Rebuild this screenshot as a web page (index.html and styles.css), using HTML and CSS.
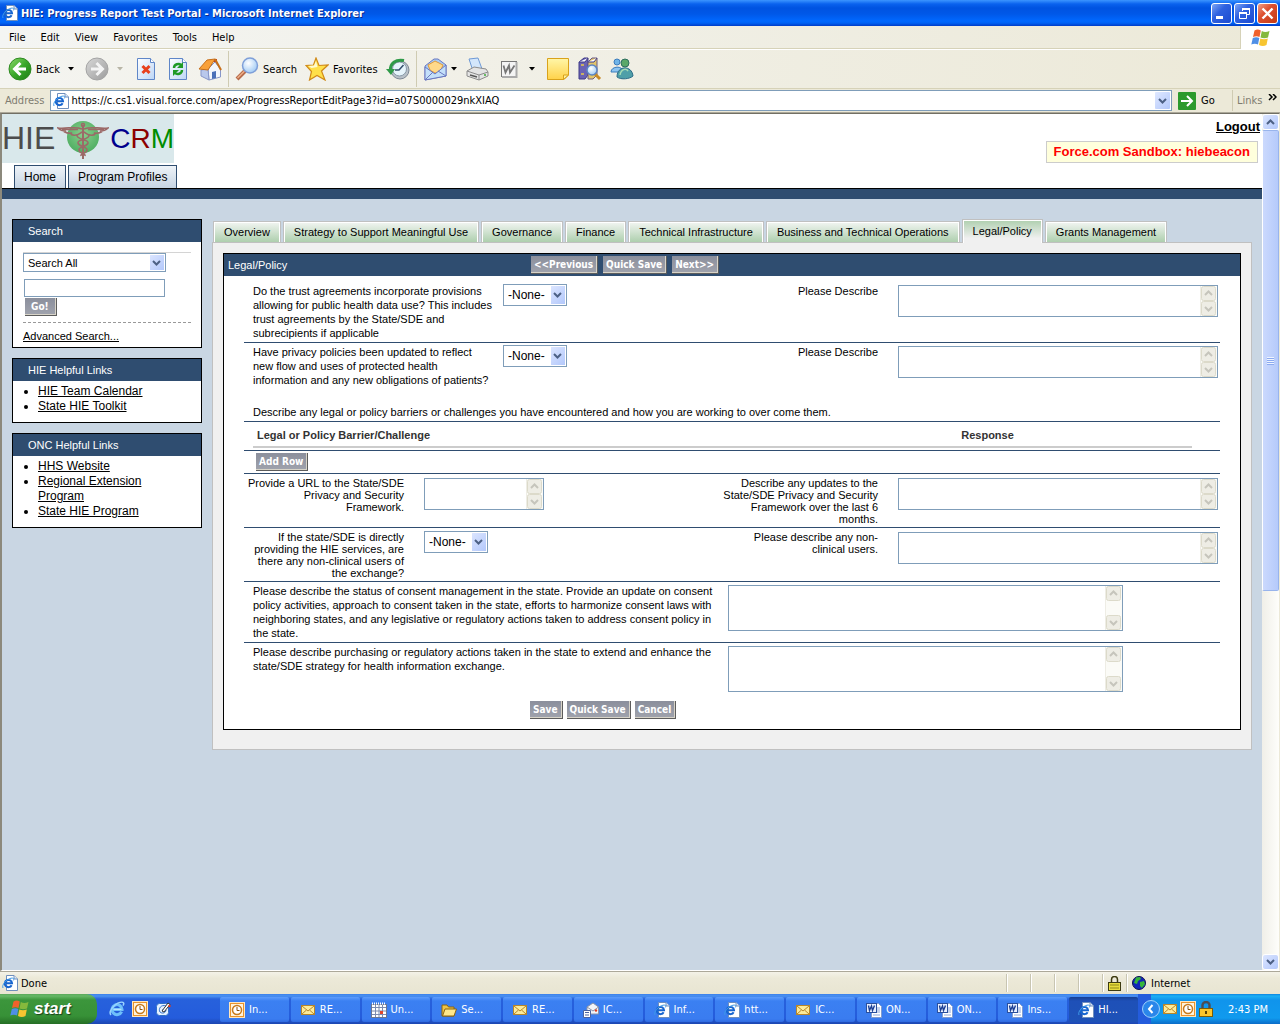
FILE: index.html
```
<!DOCTYPE html>
<html lang="en">
<head>
    <meta charset="UTF-8">
    <meta name="viewport" content="width=device-width, initial-scale=1.0">
    <title>HIE: Progress Report Test Portal</title>
    <link rel="stylesheet" href="styles.css">
</head>
<body>
    <!-- shared icons -->
    <svg class="sprite" width="0" height="0" aria-hidden="true">
        <defs>
            <linearGradient id="g-green" x1="0" y1="0" x2="1" y2="1">
                <stop offset="0" stop-color="#8fdc6c"/><stop offset="0.5" stop-color="#3aa82a"/><stop offset="1" stop-color="#1c7d14"/>
            </linearGradient>
            <linearGradient id="g-grey" x1="0" y1="0" x2="1" y2="1">
                <stop offset="0" stop-color="#d8d8d8"/><stop offset="1" stop-color="#9c9c9c"/>
            </linearGradient>
            <linearGradient id="g-paper" x1="0" y1="0" x2="1" y2="1">
                <stop offset="0" stop-color="#ffffff"/><stop offset="1" stop-color="#bcd6f6"/>
            </linearGradient>
            <linearGradient id="g-note" x1="0" y1="0" x2="0" y2="1">
                <stop offset="0" stop-color="#fff6a8"/><stop offset="1" stop-color="#ffd24a"/>
            </linearGradient>
            <radialGradient id="g-lens" cx="0.4" cy="0.35" r="0.7">
                <stop offset="0" stop-color="#ffffff"/><stop offset="1" stop-color="#9cc8f4"/>
            </radialGradient>
            <radialGradient id="g-orb" cx="0.5" cy="0.4" r="0.6">
                <stop offset="0" stop-color="#8bd08e"/><stop offset="1" stop-color="#4fae62"/>
            </radialGradient>
        </defs>
        <symbol id="i-ie" viewBox="0 0 16 16">
            <path d="M12.600 10.600A5 5 0 1 1 13 8.400H4.600" fill="none" stroke="#6fc0fa" stroke-width="3"/>
            <path d="M4.400 8.400h8" stroke="#b8e2ff" stroke-width="1.200"/>
            <path d="M2 14C-1 11 5 3 11 1.400c4-1 4.400 1 3 3.200" fill="none" stroke="#9ad4ff" stroke-width="1.500"/>
        </symbol>
        <symbol id="i-iepage" viewBox="0 0 16 16">
            <path d="M4.500 .5h7.500l3.500 3.500v11.500h-11z" fill="#fff" stroke="#6f8fbd"/>
            <path d="M12 .5V4h3.500" fill="#dde8f6" stroke="#6f8fbd"/>
            <path d="M9.600 10.200A3.600 3.600 0 1 1 10 8.200H4" fill="none" stroke="#1765cf" stroke-width="2"/>
            <path d="M1 13C-.5 10 4 4.400 9 3.200c3-.5 3 .8 2.200 2.300" fill="none" stroke="#3e9ae8" stroke-width="1"/>
        </symbol>
        <symbol id="i-mail" viewBox="0 0 16 16">
            <rect x="1.500" y="3.500" width="13" height="9" fill="#fdeb9a" stroke="#b8862a"/>
            <path d="M2 4l6 5 6-5M2 12l4.500-4M14 12L9.500 8" fill="none" stroke="#b8862a"/>
        </symbol>
        <symbol id="i-clock" viewBox="0 0 16 16">
            <rect x=".5" y=".5" width="15" height="15" fill="#e8942e" stroke="#ffe6bd"/>
            <rect x="2" y="2" width="12" height="12" fill="#fff3dc"/>
            <circle cx="8" cy="8" r="4.500" fill="#fff" stroke="#c87a1c" stroke-width="1.500"/>
            <path d="M8 5v3.500h2.500" fill="none" stroke="#8a5210"/>
        </symbol>
        <symbol id="i-word" viewBox="0 0 16 16">
            <path d="M5.500 1.500h7l3 3v11h-10z" fill="#fff" stroke="#7f9bd0"/>
            <path d="M11 6h3M11 8h3M11 10h3M7 13h7" stroke="#8aa6dc"/>
            <rect x=".5" y="1.500" width="10" height="9" fill="#e8f0ff" stroke="#2a4f9c"/>
            <path d="M2.500 3.500l1 5 2-4.500 1 4.500 2-5" fill="none" stroke="#1c3f94" stroke-width="1.400"/>
        </symbol>
        <symbol id="i-arrow" viewBox="0 0 6 4"><path d="M0 0h6L3 3.500z"/></symbol>
        <symbol id="i-flag" viewBox="0 0 20 18">
            <path d="M3.500 1.500C6 0 8 .5 9.800 1.500L8.500 8C6.500 7 4.500 7 2 8z" fill="#f0612c"/>
            <path d="M10.800 2C13 3.200 15.500 3.200 18.500 2L17 8.500c-2.500 1-5 1-7.500 0z" fill="#85b93c"/>
            <path d="M1.800 9C4 8 6.500 8 8.300 9L7 15.500C5 14.500 2.500 14.500.3 15.500z" fill="#4f8fe6"/>
            <path d="M9.300 9.500c2.200 1 5 1 7.500 0L15.500 16c-2.500 1.200-5 1.200-7.500 0z" fill="#f7c531"/>
        </symbol>
    </svg>

    <header class="titlebar">
        <svg class="icon16"><use href="#i-iepage"/></svg>
        <h1 class="window-title">HIE: Progress Report Test Portal - Microsoft Internet Explorer</h1>
        <button class="win-btn" type="button" aria-label="Minimize"><svg viewBox="0 0 19 19"><path d="M4 12h7v3H4z" fill="#fff"/></svg></button>
        <button class="win-btn" type="button" aria-label="Restore"><svg viewBox="0 0 19 19"><path d="M7.500 7V4.500h7v6H12M4.500 8.500h7v6h-7z" fill="none" stroke="#fff"/><path d="M7 4h8v2H7zM4 8h8v2H4z" fill="#fff"/></svg></button>
        <button class="win-btn win-btn-close" type="button" aria-label="Close"><svg viewBox="0 0 19 19"><path d="M4.500 4.500l10 10m0-10l-10 10" stroke="#fff" stroke-width="2.400"/></svg></button>
    </header>

    <div class="menubar">
        <nav class="menu">
            <button type="button">File</button>
            <button type="button">Edit</button>
            <button type="button">View</button>
            <button type="button">Favorites</button>
            <button type="button">Tools</button>
            <button type="button">Help</button>
        </nav>
        <div class="throbber"><svg width="20" height="18"><use href="#i-flag"/></svg></div>
    </div>

    <div class="toolbar">
        <button class="tool tool-nav" type="button">
            <svg class="icon24" viewBox="0 0 24 24"><circle cx="12" cy="12" r="11" fill="url(#g-green)" stroke="#2f8a22"/><path d="M12.500 6L6.500 12l6 6M7 12h11" fill="none" stroke="#fff" stroke-width="3"/></svg>
            <span>Back</span>
            <svg class="arrow"><use href="#i-arrow"/></svg>
        </button>
        <button class="tool tool-nav" type="button" aria-label="Forward">
            <svg class="icon24" viewBox="0 0 24 24"><circle cx="12" cy="12" r="11" fill="url(#g-grey)" stroke="#a4a4a4"/><path d="M11.500 6l6 6-6 6M17 12H6" fill="none" stroke="#f4f4f4" stroke-width="3"/></svg>
            <svg class="arrow arrow-off"><use href="#i-arrow"/></svg>
        </button>
        <button class="tool" type="button" aria-label="Stop">
            <svg class="icon24" viewBox="0 0 24 24"><path d="M3.500 1.500h13l4 4v17h-17z" fill="url(#g-paper)" stroke="#5f86c8"/><path d="M16.500 1.500v4h4" fill="#fff" stroke="#5f86c8"/><path d="M8.500 9l7 7m0-7l-7 7" stroke="#e8401c" stroke-width="3"/></svg>
        </button>
        <button class="tool" type="button" aria-label="Refresh">
            <svg class="icon24" viewBox="0 0 24 24"><path d="M3.500 1.500h13l4 4v17h-17z" fill="url(#g-paper)" stroke="#5f86c8"/><path d="M16.500 1.500v4h4" fill="#fff" stroke="#5f86c8"/><path d="M8 11c0-4 5-5 7-3" fill="none" stroke="#1f9a26" stroke-width="2.400"/><path d="M17 5v6h-6z" fill="#1f9a26"/><path d="M16 13c0 4-5 5-7 3" fill="none" stroke="#1f9a26" stroke-width="2.400"/><path d="M7 19v-6h6z" fill="#1f9a26"/></svg>
        </button>
        <button class="tool" type="button" aria-label="Home">
            <svg class="icon24" viewBox="0 0 24 24"><path d="M16 2h3v7h-3z" fill="#c23b22"/><path d="M10 12l7-7 5.500 7v8L11 23z" fill="#f3f6fc" stroke="#8796c8"/><path d="M3 13l7-1 1 11-8-4z" fill="#b9c8ec" stroke="#8796c8"/><path d="M1 12L9 3l8-1-7 11z" fill="#f9a13a" stroke="#c76f1a"/><path d="M17 2l6 11" stroke="#c76f1a" stroke-width="2"/><path d="M14 15l4-1v7l-4 1z" fill="#4a6fb8"/></svg>
        </button>
        <span class="sep"></span>
        <button class="tool" type="button">
            <svg class="icon24" viewBox="0 0 24 24"><path d="M10 14l-8 8" stroke="#b56a4a" stroke-width="4"/><path d="M9.500 14l-7 7" stroke="#f0b088" stroke-width="1.500"/><circle cx="15" cy="8.500" r="7.500" fill="url(#g-lens)" stroke="#7f9fd8" stroke-width="1.500"/></svg>
            <span>Search</span>
        </button>
        <button class="tool" type="button">
            <svg class="icon24" viewBox="0 0 24 24"><path d="M11 1l3 7.500 9-.5-6.500 6L20 23l-8-4.500L4.500 23 6.500 14.500 1 8.500l7.500-.5z" fill="#ffe04a" stroke="#d08a18" stroke-width="1.200"/><path d="M11 4l1.500 6-6 1-3-2 5.500-.5z" fill="#fffbd0"/></svg>
            <span>Favorites</span>
        </button>
        <button class="tool" type="button" aria-label="History">
            <svg class="icon24" viewBox="0 0 24 24"><circle cx="14" cy="13" r="9" fill="#b8c0c8" stroke="#7d8894"/><circle cx="13.500" cy="12" r="7" fill="#e6f4fb" stroke="#8899a8"/><path d="M17.500 8L13 13h-4" fill="none" stroke="#35506c" stroke-width="1.500"/><path d="M4.500 14C3.500 6 10 2 18 3.500" fill="none" stroke="#2f9a48" stroke-width="3"/><path d="M0 12h9l-4 6z" fill="#2f9a48"/></svg>
        </button>
        <span class="sep"></span>
        <button class="tool" type="button" aria-label="Mail">
            <svg class="icon24" viewBox="0 0 24 24"><path d="M2 9L11 2h4l8 6v11L2 23z" fill="#a9cdf5" stroke="#6a78c0"/><path d="M5 8l7-4 8 4-3 7-5 1-5-3z" fill="#ffd98a" stroke="#e09a3c"/><path d="M2 10l10 7 11-9v11L2 23z" fill="#c4e0fa" stroke="#6a78c0"/><path d="M2 23l8-8M23 19l-8-5" fill="none" stroke="#6a78c0"/></svg>
            <svg class="arrow"><use href="#i-arrow"/></svg>
        </button>
        <button class="tool" type="button" aria-label="Print">
            <svg class="icon24" viewBox="0 0 24 24"><path d="M4 2l9-1 4 11-9 2z" fill="#d3e6fb" stroke="#6f9ad6"/><path d="M2 14l7-4 12 2 2 3v4l-9 4-12-4z" fill="#e4e4e4" stroke="#8c8c8c"/><path d="M2 14l12 4 9-3M14 18v5" fill="none" stroke="#8c8c8c"/><path d="M5 18l7 2" stroke="#555" stroke-width="1.500"/><circle cx="20" cy="18" r="1" fill="#3fae3a"/></svg>
        </button>
        <button class="tool tool-nav" type="button" aria-label="Edit with Word">
            <svg class="icon24" viewBox="0 0 24 24"><rect x="4.500" y="4.500" width="15" height="15" fill="#f4f4f4" stroke="#777"/><path d="M19.500 5v15H5" fill="none" stroke="#aaa" stroke-width="2"/><path d="M6.500 8.500l2 7 3.500-7 1 7 4.500-7" fill="none" stroke="#777" stroke-width="1.800"/></svg>
            <svg class="arrow"><use href="#i-arrow"/></svg>
        </button>
        <button class="tool" type="button" aria-label="Discuss">
            <svg class="icon24" viewBox="0 0 24 24"><path d="M1.500 1.500h21V18L18 22.500H1.500z" fill="url(#g-note)" stroke="#d9a21a"/><path d="M17.500 22.500V18h5z" fill="#fff2a0" stroke="#d9a21a"/></svg>
        </button>
        <button class="tool" type="button" aria-label="Research">
            <svg class="icon24" viewBox="0 0 24 24"><path d="M1 5l5-4h4v17l-3 4H1z" fill="#6a63b4" stroke="#3f3a86"/><path d="M10 5l4-4h5v17l-4 4h-5z" fill="#e3c56a" stroke="#6b5a86"/><path d="M1 5h6l3-4M10 5h6l3-4" fill="#fff" stroke="#3f3a86"/><path d="M3 8h3M3 17h3M12 18h3" stroke="#e8c94a" stroke-width="1.500"/><path d="M17 17l5 5" stroke="#c78a28" stroke-width="3"/><circle cx="14" cy="13" r="5" fill="url(#g-lens)" stroke="#5b84c4" stroke-width="1.500"/></svg>
        </button>
        <button class="tool" type="button" aria-label="Messenger">
            <svg class="icon24" viewBox="0 0 24 24"><circle cx="7" cy="5" r="3" fill="#6fb4e8" stroke="#3c7cbc"/><path d="M1 15c0-6 12-7 12 0z" fill="#8cc4f0" stroke="#3c7cbc"/><circle cx="15" cy="6" r="4" fill="#5aa868" stroke="#2f6f60"/><path d="M7 20c0-12 15-12 16-1-3 3-12 4-16 1z" fill="#4f9fa8" stroke="#2c6c88"/><path d="M10 18c1-6 6-7 8-4" fill="none" stroke="#a6dcb4" stroke-width="1.500"/></svg>
        </button>
    </div>

    <div class="addressbar">
        <label class="dim" for="address">Address</label>
        <div class="address-box">
            <svg class="icon16"><use href="#i-iepage"/></svg>
            <input id="address" type="text" value="https://c.cs1.visual.force.com/apex/ProgressReportEditPage3?id=a07S0000029nkXIAQ">
            <button class="drop" type="button" aria-label="Show addresses"></button>
        </div>
        <button class="go" type="button">
            <svg width="18" height="18" viewBox="0 0 18 18"><rect width="18" height="18" rx="1" fill="#2c9a2c"/><path d="M3 9h11M9 4l5 5-5 5" fill="none" stroke="#fff" stroke-width="2"/></svg>
            <span>Go</span>
        </button>
        <div class="links"><span class="dim">Links</span><svg width="9" height="7" viewBox="0 0 9 7"><path d="M1 0l3 3-3 3M5 0l3 3-3 3" fill="none" stroke="#000" stroke-width="1.500"/></svg></div>
    </div>

    <div class="viewport">
        <div class="page">
            <div class="page-top">
                <div class="brand">
                    <div class="logo">
                        <span class="logo-hie">HIE</span>
                        <svg class="logo-mark" viewBox="0 0 52 44">
                            <circle cx="26" cy="20" r="16" fill="url(#g-orb)"/>
                            <g fill="none" stroke="#9c6a68" stroke-width="1.600">
                                <path d="M26 8v34" stroke-width="2"/>
                                <circle cx="26" cy="8" r="1.500"/>
                                <path d="M25 12C18 9 10 12 1 11c3 3 6 3 8 3-2 0-2 1-1 1 3 2 6 1 7 1-2 1 0 2 1 2 4 1 6-1 9-3"/>
                                <path d="M27 12c7-3 15 0 24-1-3 3-6 3-8 3 2 0 2 1 1 1-3 2-6 1-7 1 2 1 0 2-1 2-4 1-6-1-9-3"/>
                                <path d="M5 12.500h16M31 12.500h16"/>
                                <path d="M20 18c-1 5 12 4 11 8s-9 3-9 7 7 3 6 6"/>
                                <path d="M32 18c1 5-12 4-11 8s9 3 9 7-7 3-6 6"/>
                            </g>
                        </svg>
                        <span class="logo-crm"><span class="c">C</span><span class="r">R</span><span class="m">M</span></span>
                    </div>
                    <nav class="app-tabs">
                        <a href="#">Home</a>
                        <a href="#">Program Profiles</a>
                    </nav>
                </div>
                <div class="account">
                    <a class="logout" href="#">Logout</a>
                    <span class="sandbox">Force.com Sandbox: hiebeacon</span>
                </div>
            </div>
            <div class="strip"></div>

            <div class="columns">
                <aside class="sidebar">
                    <section class="box">
                        <h2>Search</h2>
                        <form class="search">
                            <select class="xp-select search-scope" aria-label="Search scope"><option>Search All</option></select>
                            <input class="search-text" type="text" aria-label="Search text">
                            <button class="btn" type="button">Go!</button>
                            <a class="advanced" href="#">Advanced Search...</a>
                        </form>
                    </section>
                    <section class="box">
                        <h2>HIE Helpful Links</h2>
                        <ul>
                            <li><a href="#">HIE Team Calendar</a></li>
                            <li><a href="#">State HIE Toolkit</a></li>
                        </ul>
                    </section>
                    <section class="box">
                        <h2>ONC Helpful Links</h2>
                        <ul>
                            <li><a href="#">HHS Website</a></li>
                            <li><a href="#">Regional Extension Program</a></li>
                            <li><a href="#">State HIE Program</a></li>
                        </ul>
                    </section>
                </aside>

                <main class="main">
                    <nav class="tabs">
                        <a href="#">Overview</a>
                        <a href="#">Strategy to Support Meaningful Use</a>
                        <a href="#">Governance</a>
                        <a href="#">Finance</a>
                        <a href="#">Technical Infrastructure</a>
                        <a href="#">Business and Technical Operations</a>
                        <a class="active" href="#">Legal/Policy</a>
                        <a href="#">Grants Management</a>
                    </nav>
                    <div class="panel">
                        <form class="block">
                            <div class="block-head">
                                <h2>Legal/Policy</h2>
                                <div class="block-buttons">
                                    <button class="btn" type="button">&lt;&lt;Previous</button>
                                    <button class="btn" type="button">Quick Save</button>
                                    <button class="btn" type="button">Next&gt;&gt;</button>
                                </div>
                            </div>
                            <div class="rows">
                                <div class="row row-question">
                                    <label for="trust">Do the trust agreements incorporate provisions allowing for public health data use? This includes trust agreements by the State/SDE and subrecipients if applicable</label>
                                    <select class="xp-select" id="trust"><option>-None-</option></select>
                                    <label class="small" for="trust-desc">Please Describe</label>
                                    <textarea id="trust-desc"></textarea>
                                </div>
                                <div class="row row-question row-open">
                                    <label for="privacy">Have privacy policies been updated to reflect new flow and uses of protected health information and any new obligations of patients?</label>
                                    <select class="xp-select" id="privacy"><option>-None-</option></select>
                                    <label class="small" for="privacy-desc">Please Describe</label>
                                    <textarea id="privacy-desc"></textarea>
                                </div>
                                <p class="row row-text">Describe any legal or policy barriers or challenges you have encountered and how you are working to over come them.</p>
                                <div class="row row-table">
                                    <table>
                                        <thead><tr><th>Legal or Policy Barrier/Challenge</th><th>Response</th></tr></thead>
                                    </table>
                                </div>
                                <div class="row row-add">
                                    <button class="btn" type="button">Add Row</button>
                                </div>
                                <div class="row row-pair">
                                    <label class="small" for="url">Provide a URL to the State/SDE Privacy and Security Framework.</label>
                                    <textarea class="narrow" id="url"></textarea>
                                    <label class="small" for="updates">Describe any updates to the State/SDE Privacy and Security Framework over the last 6 months.</label>
                                    <textarea id="updates"></textarea>
                                </div>
                                <div class="row row-pair">
                                    <label class="small" for="nonclinical">If the state/SDE is directly providing the HIE services, are there any non-clinical users of the exchange?</label>
                                    <select class="xp-select" id="nonclinical"><option>-None-</option></select>
                                    <label class="small" for="users">Please describe any non-clinical users.</label>
                                    <textarea id="users"></textarea>
                                </div>
                                <div class="row row-wide">
                                    <label for="consent">Please describe the status of consent management in the state. Provide an update on consent policy activities, approach to consent taken in the state, efforts to harmonize consent laws with neighboring states, and any legislative or regulatory actions taken to address consent policy in the state.</label>
                                    <textarea class="tall" id="consent"></textarea>
                                </div>
                                <div class="row row-wide row-open">
                                    <label for="purchasing">Please describe purchasing or regulatory actions taken in the state to extend and enhance the state/SDE strategy for health information exchange.</label>
                                    <textarea class="tall" id="purchasing"></textarea>
                                </div>
                            </div>
                            <div class="block-foot">
                                <button class="btn" type="button">Save</button>
                                <button class="btn" type="button">Quick Save</button>
                                <button class="btn" type="button">Cancel</button>
                            </div>
                        </form>
                    </div>
                </main>
            </div>
        </div>
        <div class="scrollbar">
            <button class="scroll-btn" type="button" aria-label="Scroll up"><svg width="9" height="6" viewBox="0 0 9 6"><path d="M1 5l3.500-3.500L8 5" fill="none" stroke="#4d6185" stroke-width="2"/></svg></button>
            <div class="scroll-track"><div class="scroll-thumb"></div></div>
            <button class="scroll-btn" type="button" aria-label="Scroll down"><svg width="9" height="6" viewBox="0 0 9 6"><path d="M1 1l3.500 3.500L8 1" fill="none" stroke="#4d6185" stroke-width="2"/></svg></button>
        </div>
    </div>

    <div class="statusbar">
        <div class="status-text"><svg class="icon16"><use href="#i-iepage"/></svg><span>Done</span></div>
        <div class="cell"></div>
        <div class="cell"></div>
        <div class="cell"></div>
        <div class="cell"></div>
        <div class="cell"><svg width="13" height="15" viewBox="0 0 13 15"><path d="M3.500 7V3.500a3 3 0 0 1 6 0V7" fill="none" stroke="#3c3a10" stroke-width="1.500"/><rect x=".5" y="6.500" width="12" height="8" fill="#e6dc3c" stroke="#3c3a10"/><path d="M2 9h9M2 12h9" stroke="#8f8818"/></svg></div>
        <div class="cell cell-zone"><svg width="14" height="14" viewBox="0 0 14 14"><circle cx="7" cy="7" r="6.500" fill="#1226b8" stroke="#0a0f50"/><path d="M4 1.500l4-.5 1 2-3 2-1 3-3-1zM8 6l4-1 1 3-3 4-2-2z" fill="#37b53a"/></svg><span>Internet</span></div>
    </div>

    <footer class="taskbar">
        <button class="start" type="button"><svg width="20" height="18"><use href="#i-flag"/></svg><span>start</span></button>
        <div class="quick">
            <button type="button" aria-label="Internet Explorer"><svg class="icon16"><use href="#i-ie"/></svg></button>
            <button type="button" aria-label="Outlook"><svg class="icon16"><use href="#i-clock"/></svg></button>
            <button type="button" aria-label="Show desktop"><svg class="icon16" viewBox="0 0 16 16"><rect x="1.500" y="2.500" width="12" height="12" rx="3" fill="#e6f2ff" stroke="#2f6fc8"/><path d="M11 5C6 3 3 8 5 11c2 2 6 1 6-2H7" fill="none" stroke="#2f6fc8"/><path d="M7 10l6-8 2 1.500-6 7.500z" fill="#fff" stroke="#333"/><circle cx="14.500" cy="5" r="1.200" fill="#e03a1c"/></svg></button>
        </div>
        <div class="tasks">
            <button type="button"><svg class="icon16"><use href="#i-clock"/></svg><span>In...</span></button>
            <button type="button"><svg class="icon16"><use href="#i-mail"/></svg><span>RE...</span></button>
            <button type="button"><svg class="icon16" viewBox="0 0 16 16"><rect x=".5" y="2.500" width="15" height="13" fill="#fff" stroke="#6c7690"/><path d="M1 5.500h14M1 9h14M1 12.500h14M4.500 3v12M8 3v12M11.500 3v12" stroke="#7d8cb0"/><path d="M1 1.500h14" stroke="#fff" stroke-width="2" stroke-dasharray="1 1"/><rect x="9" y="9" width="3" height="3" fill="#e0452a"/></svg><span>Un...</span></button>
            <button type="button"><svg class="icon16" viewBox="0 0 16 16"><path d="M1 3h5l1.500 2H13v9H1z" fill="#f0c445" stroke="#8c6410"/><path d="M4 7h11.500L13 14H1.500z" fill="#ffe88c" stroke="#8c6410"/></svg><span>Se...</span></button>
            <button type="button"><svg class="icon16"><use href="#i-mail"/></svg><span>RE...</span></button>
            <button type="button"><svg class="icon16" viewBox="0 0 16 16"><path d="M4 5l6-4 5.500 4v7H4z" fill="#f2f4f8" stroke="#8a93a8"/><path d="M4 5l6 4 5.500-4" fill="none" stroke="#8a93a8"/><path d="M.5 8.500h7v7h-7z" fill="#fff" stroke="#4a62a0"/><path d="M2 10.500h4M2 13h4" stroke="#4a62a0"/><circle cx="13" cy="8.500" r="1.200" fill="#e03a1c"/></svg><span>IC...</span></button>
            <button type="button"><svg class="icon16"><use href="#i-iepage"/></svg><span>Inf...</span></button>
            <button type="button"><svg class="icon16"><use href="#i-iepage"/></svg><span>htt...</span></button>
            <button type="button"><svg class="icon16"><use href="#i-mail"/></svg><span>IC...</span></button>
            <button type="button"><svg class="icon16"><use href="#i-word"/></svg><span>ON...</span></button>
            <button type="button"><svg class="icon16"><use href="#i-word"/></svg><span>ON...</span></button>
            <button type="button"><svg class="icon16"><use href="#i-word"/></svg><span>Ins...</span></button>
            <button class="active" type="button"><svg class="icon16"><use href="#i-iepage"/></svg><span>HI...</span></button>
        </div>
        <div class="tray">
            <button class="tray-toggle" type="button" aria-label="Show hidden icons"><svg width="18" height="18" viewBox="0 0 18 18"><circle cx="9" cy="9" r="8.500" fill="#2a86ea" stroke="#9fd0fa"/><path d="M10.500 5L7 9l3.500 4" fill="none" stroke="#fff" stroke-width="2"/></svg></button>
            <svg class="icon16"><use href="#i-mail"/></svg>
            <svg class="icon16"><use href="#i-clock"/></svg>
            <svg class="icon16" viewBox="0 0 16 16"><path d="M4.500 8V4a3.500 3 0 0 1 7 0v4" fill="none" stroke="#4c4c54" stroke-width="2.400"/><rect x="1.500" y="7.500" width="13" height="8" fill="#fcc52c" stroke="#7a5c08"/><path d="M8 10v3" stroke="#5c4404" stroke-width="2"/></svg>
            <time>2:43 PM</time>
        </div>
    </footer>
</body>
</html>
```
FILE: styles.css
```
* {
    box-sizing: border-box;
}
body {
    margin: 0;
    height: 100vh;
    display: flex;
    flex-direction: column;
    overflow: hidden;
    font-family: "DejaVu Sans Condensed", "DejaVu Sans", Tahoma, sans-serif;
    font-size: 11px;
    color: #000;
    background-color: #ece9d8;
}
button, input, select, textarea {
    font: inherit;
    color: inherit;
    margin: 0;
}
button {
    border: none;
    background: none;
    padding: 0;
}
svg {
    display: block;
    flex: none;
}
.sprite {
    position: absolute;
}
.icon16 {
    width: 16px;
    height: 16px;
}
.icon24 {
    width: 24px;
    height: 24px;
}
.arrow {
    width: 6px;
    height: 4px;
}
.arrow-off {
    fill: #b8b5a6;
}
.dim {
    color: #7f7c70;
}

/* title bar */
.titlebar {
    flex: none;
    height: 26px;
    display: flex;
    align-items: center;
    gap: 2px;
    padding: 0 2px;
    background: linear-gradient(#3c95ff 0, #0a62ee 4px, #0053e1 8px, #0058e8 14px, #0068ff 21px, #0062f4 23px, #003cc8 26px);
}
.window-title {
    flex: 1;
    margin: 0 0 0 1px;
    font-size: 11px;
    font-weight: bold;
    color: #fff;
    text-shadow: 1px 1px #0b2a8c;
}
.win-btn {
    width: 21px;
    height: 21px;
    border: 1px solid #fff;
    border-radius: 3px;
    background: linear-gradient(135deg, #7fa6f5, #2f62e0 40%, #1c4bd0);
}
.win-btn-close {
    background: linear-gradient(135deg, #f0a088, #dd5030 40%, #c23a14);
}

/* menu bar */
.menubar {
    flex: none;
    height: 24px;
    display: flex;
    border-bottom: 1px solid #fff;
    background: linear-gradient(90deg, #f4f5f3, #ece9d8);
}
.menu {
    flex: 1;
    display: flex;
    gap: 15px;
    padding-left: 9px;
    border-bottom: 1px solid #d6d2b8;
}
.throbber {
    width: 40px;
    display: flex;
    align-items: center;
    justify-content: center;
    border-left: 1px solid #d6d2b8;
    background-color: #fff;
}

/* toolbar */
.toolbar {
    flex: none;
    height: 39px;
    display: flex;
    align-items: center;
    padding-left: 4px;
    border-bottom: 1px solid #d6d2b8;
    background: linear-gradient(90deg, #f4f4f0, #ece9d8);
}
.tool {
    height: 32px;
    display: flex;
    align-items: center;
    gap: 4px;
    padding: 0 4px;
}
.tool-nav {
    margin-right: 3px;
}
.tool-nav .arrow {
    margin-left: 4px;
}
.sep {
    width: 1px;
    height: 36px;
    margin: 0 2px;
    background-color: #cfcbb2;
}

/* address bar */
.addressbar {
    flex: none;
    height: 24px;
    display: flex;
    align-items: center;
    gap: 6px;
    padding-left: 5px;
    border-bottom: 1px solid #aca899;
}
.address-box {
    flex: 1;
    height: 21px;
    display: flex;
    align-items: center;
    gap: 2px;
    padding: 1px;
    padding-left: 2px;
    border: 1px solid #7f9db9;
    background-color: #fff;
}
.address-box input {
    flex: 1;
    height: 17px;
    padding: 0;
    border: none;
    outline: none;
    background: none;
}
.drop {
    width: 15px;
    height: 17px;
    border-radius: 1px;
    background: url("data:image/svg+xml,%3Csvg xmlns='http://www.w3.org/2000/svg' width='9' height='6'%3E%3Cpath d='M1 1l3.500 3.500L8 1' fill='none' stroke='%234d6185' stroke-width='2'/%3E%3C/svg%3E") no-repeat center, linear-gradient(135deg, #dfe8ff, #b3c8fb);
}
.go {
    display: flex;
    align-items: center;
    gap: 5px;
    width: 48px;
}
.links {
    width: 48px;
    height: 21px;
    display: flex;
    align-items: center;
    gap: 6px;
    padding-left: 4px;
    border-left: 1px solid #cfcbb2;
}
.links svg {
    align-self: flex-start;
    margin-top: 4px;
}

/* browser viewport */
.viewport {
    flex: 1;
    min-height: 0;
    display: flex;
    border: 1px solid #716f64;
    border-left: 2px solid #8c897c;
    border-right-color: #ece9d8;
    border-bottom-color: #fff;
}
.page {
    flex: 1;
    overflow: hidden;
    font-family: "Liberation Sans", Arial, sans-serif;
    background-color: #c9d6e3;
}
.page a {
    color: #000;
}
.page-top {
    display: flex;
    justify-content: space-between;
    background-color: #fff;
}
.logo {
    width: 172px;
    height: 49px;
    display: flex;
    align-items: center;
    justify-content: space-between;
    background-color: #d9e8eb;
    line-height: 49px;
}
.logo-hie {
    font-size: 32px;
    color: #4c4c4c;
}
.logo-mark {
    width: 52px;
    height: 44px;
}
.logo-crm {
    font-size: 28px;
}
.logo-crm .c {
    color: #00008c;
}
.logo-crm .r {
    color: #8c0000;
}
.logo-crm .m {
    color: #008c00;
}
.app-tabs {
    display: flex;
    gap: 2px;
    padding: 2px 0 0 12px;
}
.app-tabs a {
    padding: 0 9px;
    border: 1px solid #2f4d70;
    border-bottom: none;
    background: linear-gradient(#eef3f8, #c6d4e3);
    font-size: 12px;
    line-height: 22px;
    text-decoration: none;
}
.account {
    display: flex;
    flex-direction: column;
    align-items: flex-end;
    gap: 6px;
    padding: 5px 2px;
    font-size: 13px;
    font-weight: bold;
}
.logout {
    line-height: 16px;
}
.sandbox {
    margin-right: 2px;
    padding: 0 7px;
    border: 1px solid #ccc;
    background-color: #ffffdc;
    line-height: 20px;
    color: #f00;
}
.strip {
    height: 11px;
    border-top: 1px solid #000;
    background-color: #2f4d70;
}
.columns {
    display: flex;
    align-items: flex-start;
    gap: 10px;
    padding: 20px 10px;
}

/* sidebar */
.sidebar {
    width: 190px;
    flex: none;
    display: flex;
    flex-direction: column;
    gap: 10px;
}
.box {
    border: 1px solid #000;
    background-color: #fff;
}
.box h2 {
    margin: 0;
    padding-left: 15px;
    background-color: #2f4d70;
    color: #fff;
    font-size: 11px;
    font-weight: normal;
    line-height: 22px;
}
.box ul {
    margin: 0;
    padding: 3px 24px 8px 25px;
    font-size: 12px;
    line-height: 15px;
}
.search {
    margin: 10px 10px 4px;
    display: flex;
    flex-direction: column;
    align-items: flex-start;
    border-top: 1px solid #d4d4d4;
}
.xp-select {
    appearance: none;
    width: 64px;
    height: 22px;
    padding: 0 4px;
    border: 1px solid #7f9db9;
    border-radius: 0;
    font-size: 12px;
    background: url("data:image/svg+xml,%3Csvg xmlns='http://www.w3.org/2000/svg' width='9' height='6'%3E%3Cpath d='M1 1l3.500 3.500L8 1' fill='none' stroke='%234d6185' stroke-width='2'/%3E%3C/svg%3E") no-repeat right 4px center, linear-gradient(135deg, #dbe5ff, #b3c8fb) no-repeat right 1px center / 14px calc(100% - 2px), #fff;
}
.search-scope {
    width: 143px;
    height: 19px;
    font-size: 11px;
}
.search-text {
    width: 141px;
    height: 18px;
    margin: 7px 0 0 1px;
    padding: 0 2px;
    border: 1px solid #7f9db9;
}
.btn {
    height: 18px;
    padding: 0 4px 0 3px;
    border-right: 1px solid #5c5c5c;
    border-bottom: 1px solid #5c5c5c;
    box-shadow: inset -1px -1px #d8d4c8;
    background: linear-gradient(#8b8f9c, #a0a3ad);
    font-family: "DejaVu Sans Condensed", "DejaVu Sans", Verdana, sans-serif;
    font-size: 10px;
    font-weight: bold;
    line-height: 17px;
    color: #fff;
}
.search .btn {
    margin: 1px 0 0 2px;
    padding: 0 7px 0 6px;
}
.advanced {
    align-self: stretch;
    margin-top: 6px;
    padding-top: 6px;
    border-top: 1px dashed #999;
    line-height: 14px;
}

/* report tabs */
.main {
    flex: 1;
    min-width: 0;
}
.tabs {
    height: 23px;
    display: flex;
    align-items: flex-end;
    gap: 2px;
    padding-left: 1px;
}
.tabs a {
    padding: 0 10px;
    border: 1px solid #c0c0c0;
    border-bottom: none;
    box-shadow: inset 1px 1px #fff, inset -1px 0 #fff;
    background: linear-gradient(#f2f5f2, #aecfae);
    line-height: 20px;
    white-space: nowrap;
    text-decoration: none;
}
.tabs .active {
    z-index: 1;
    margin-bottom: -1px;
    background: linear-gradient(#aecfae, #f0f0f0 80%);
    line-height: 23px;
}
.panel {
    padding: 10px 10px 19px;
    border: 1px solid #c0c0c0;
    background-color: #f0f0f0;
}
.block {
    border: 1px solid #000;
    background-color: #fff;
}
.block-head {
    display: grid;
    grid-template-columns: 307px 1fr;
    align-items: center;
    height: 22px;
    background-color: #2f4d70;
}
.block-head h2 {
    margin: 0;
    padding-left: 4px;
    color: #fff;
    font-size: 11px;
    font-weight: normal;
}
.block-buttons {
    display: flex;
    gap: 5px;
}

/* form rows */
.rows {
    padding: 6px 20px 0;
}
.row {
    display: grid;
    align-items: start;
    column-gap: 10px;
    margin: 0;
    padding: 2px 2px 2px 9px;
    border-bottom: 1px solid #2f4d70;
    line-height: 14px;
}
.row-question {
    grid-template-columns: 240px 1fr 170px 320px;
    min-height: 60px;
}
.row-open {
    border-bottom: none;
}
.row-pair {
    grid-template-columns: 170px 1fr 170px 320px;
    padding: 3px 2px 2px 0;
}
.row-wide {
    grid-template-columns: 465px 395px;
}
.row-table {
    padding: 3px 28px 2px 9px;
}
.row-table table {
    width: 100%;
    border-collapse: collapse;
    border-bottom: 2px solid #ccc;
}
.row-table th {
    width: 75%;
    padding: 3px 4px 4px;
    color: #333;
    text-align: left;
}
.row-table th + th {
    width: 25%;
}
.row-add {
    justify-items: start;
    padding: 2px 12px;
}
.small {
    padding: 0 10px 0 3px;
    text-align: right;
}
.row-pair .small {
    line-height: 12px;
}
textarea {
    width: 100%;
    height: 32px;
    margin-top: 1px;
    padding: 2px 18px 2px 2px;
    border: 1px solid #7f9db9;
    resize: none;
    overflow: hidden;
    background:
        url("data:image/svg+xml,%3Csvg xmlns='http://www.w3.org/2000/svg' width='17' height='15'%3E%3Crect x='1.500' y='.5' width='14' height='14' rx='2' fill='%23eeede5' stroke='%23dcdaca'/%3E%3Cpath d='M5 9l3.500-3.500L12 9' fill='none' stroke='%23c6c5bc' stroke-width='2'/%3E%3C/svg%3E") no-repeat right top,
        url("data:image/svg+xml,%3Csvg xmlns='http://www.w3.org/2000/svg' width='17' height='15'%3E%3Crect x='1.500' y='.5' width='14' height='14' rx='2' fill='%23eeede5' stroke='%23dcdaca'/%3E%3Cpath d='M5 6l3.500 3.500L12 6' fill='none' stroke='%23c6c5bc' stroke-width='2'/%3E%3C/svg%3E") no-repeat right bottom,
        linear-gradient(90deg, #eeede5 1px, #fbfbf7 1px) no-repeat right top / 17px 100%,
        #fff;
}
.narrow {
    width: 120px;
}
.tall {
    height: 46px;
}
.block-foot {
    display: flex;
    gap: 4px;
    padding: 7px 0 10px 306px;
}

/* page scrollbar */
.scrollbar {
    width: 17px;
    flex: none;
    display: flex;
    flex-direction: column;
    background: linear-gradient(90deg, #f0efe8, #fefefb);
}
.scroll-btn {
    height: 16px;
    display: flex;
    align-items: center;
    justify-content: center;
    border: 1px solid #fff;
    border-radius: 3px;
    background: linear-gradient(135deg, #dbe5ff, #b3c8fb);
}
.scroll-track {
    flex: 1;
}
.scroll-thumb {
    height: 56%;
    border: 1px solid #98b4ec;
    border-left-color: #fff;
    border-radius: 2px;
    background:
        repeating-linear-gradient(#eef4ff 0 1px, #8caaf0 1px 2px) no-repeat center / 7px 8px,
        linear-gradient(90deg, #cbd9fd, #b5cafb);
}

/* status bar */
.statusbar {
    flex: none;
    height: 23px;
    display: flex;
    align-items: center;
    border-top: 1px solid #aca899;
    background: linear-gradient(#f4f2e8, #ece9d8 6px, #e8e5d2);
}
.status-text {
    flex: 1;
    display: flex;
    align-items: center;
    gap: 3px;
    padding-left: 2px;
}
.cell {
    width: 24px;
    height: 18px;
    display: flex;
    align-items: center;
    justify-content: center;
    border-left: 1px solid #c8c5b2;
    box-shadow: inset 1px 0 #fff;
}
.cell-zone {
    width: 154px;
    justify-content: flex-start;
    gap: 5px;
    padding-left: 5px;
}

/* taskbar */
.taskbar {
    flex: none;
    height: 30px;
    display: flex;
    background: linear-gradient(#3a80ea 0, #4b93f2 2px, #2761dc 5px, #245cdc 24px, #1c46b0 30px);
    color: #fff;
}
.start {
    width: 97px;
    display: flex;
    align-items: center;
    gap: 4px;
    padding-left: 10px;
    border-radius: 0 10px 10px 0;
    background: linear-gradient(#5aa85a 0, #66b866 2px, #3c963c 6px, #379137 22px, #256e25 30px);
    font-family: "Liberation Sans", Arial, sans-serif;
    font-size: 17px;
    font-style: italic;
    font-weight: bold;
    text-shadow: 1px 1px 1px #1a401a;
}
.quick {
    width: 123px;
    display: flex;
    align-items: center;
    gap: 7px;
    padding-left: 12px;
}
.tasks {
    flex: 1;
    min-width: 0;
    display: flex;
    gap: 2px;
    padding: 3px 0 2px;
}
.tasks button {
    flex: 1;
    min-width: 0;
    display: flex;
    align-items: center;
    gap: 4px;
    padding-left: 9px;
    border-radius: 2px;
    background: linear-gradient(#5c9cfc, #3b80f2 4px, #3a7cf0 22px, #2f6ae0);
    color: #fff;
}
.tasks .active {
    background: linear-gradient(#163f92, #1e50b8 4px, #1e52b7);
}
.tray {
    width: 142px;
    display: flex;
    align-items: center;
    gap: 2px;
    padding-left: 4px;
    background: linear-gradient(90deg, #245cdc 13px, transparent 13px), linear-gradient(#0c84e0 0, #1cb0f4 2px, #1094ec 6px, #109aee 24px, #0c6cc8 30px);
}
.tray time {
    margin: 0 auto;
}
```
